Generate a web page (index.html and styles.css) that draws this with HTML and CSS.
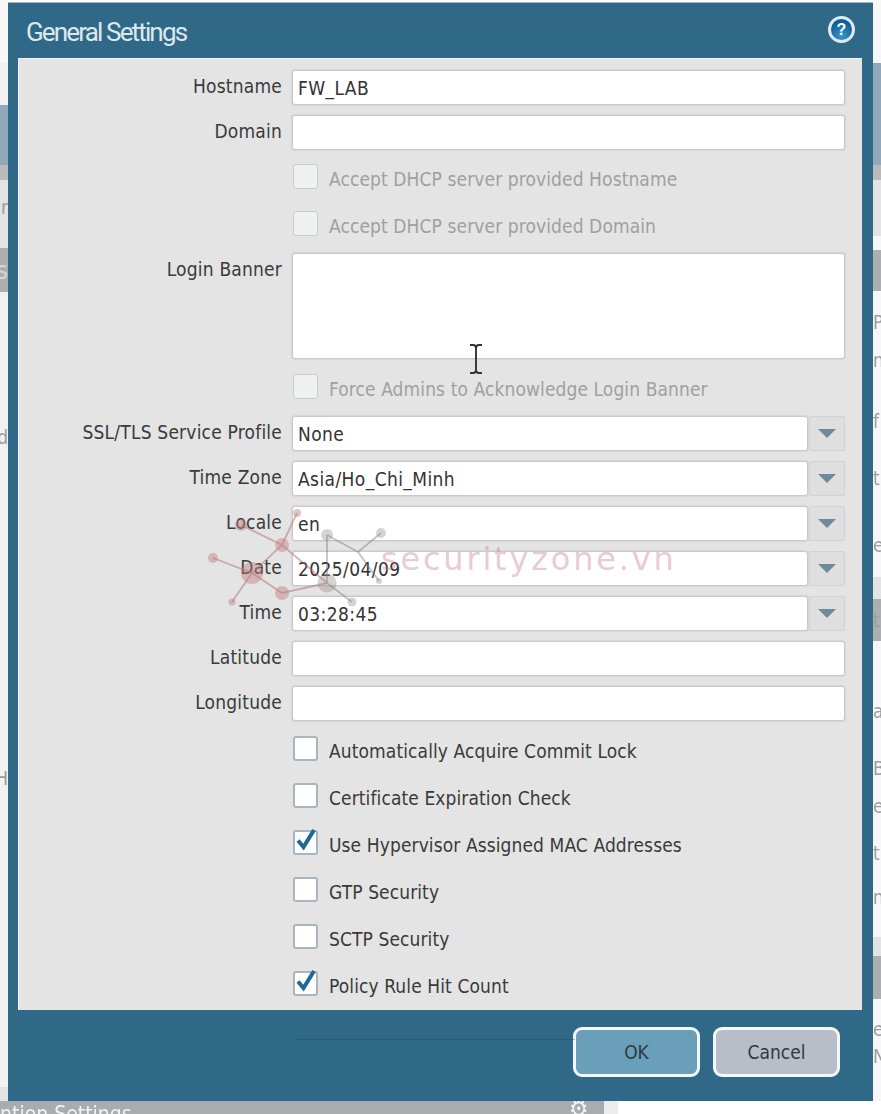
FILE: index.html
```html
<!DOCTYPE html>
<html lang="en">

<head>
    <meta charset="UTF-8">
    <meta name="viewport" content="width=device-width, initial-scale=1.0">
    <title>General Settings</title>
    <link rel="stylesheet" href="styles.css">
</head>

<body>
    <div class="page">
        <div class="top-row">
            <!-- page behind the dialog, only the edges show -->
            <div class="strip">
                <div class="band band-white h63"></div>
                <div class="band band-pale h42"></div>
                <div class="band band-blue h60"></div>
                <div class="band band-grey h15"></div>
                <div class="band band-light h54 letter-left">r</div>
                <div class="band band-light h14"></div>
                <div class="band band-dark h44 letter-left letter-big">s</div>
                <div class="band band-pale h120"></div>
                <div class="band band-pale h50 letter-left">d</div>
                <div class="band band-pale h286"></div>
                <div class="band band-pale h60 letter-left">H</div>
                <div class="band band-pale grow"></div>
                <div class="band band-light h14"></div>
            </div>

            <div class="dialog">
                <div class="dialog-head">
                    <h1 class="dialog-title">General Settings</h1>
                    <div class="help-icon">?</div>
                </div>

                <div class="dialog-body">
                    <div class="row">
                        <label class="row-label">Hostname</label>
                        <div class="text-field">FW_LAB</div>
                    </div>
                    <div class="row">
                        <label class="row-label">Domain</label>
                        <div class="text-field"></div>
                    </div>
                    <div class="check-row gap-14 disabled">
                        <span class="check"></span>
                        <span class="check-label">Accept DHCP server provided Hostname</span>
                    </div>
                    <div class="check-row disabled">
                        <span class="check"></span>
                        <span class="check-label">Accept DHCP server provided Domain</span>
                    </div>
                    <div class="row gap-17">
                        <label class="row-label">Login Banner</label>
                        <div class="text-field text-area"></div>
                    </div>
                    <div class="check-row gap-15 disabled">
                        <span class="check"></span>
                        <span class="check-label">Force Admins to Acknowledge Login Banner</span>
                    </div>
                    <div class="row gap-17">
                        <label class="row-label">SSL/TLS Service Profile</label>
                        <div class="text-field">None</div>
                        <div class="drop-btn"><span class="drop-arrow"></span></div>
                    </div>
                    <div class="row">
                        <label class="row-label">Time Zone</label>
                        <div class="text-field">Asia/Ho_Chi_Minh</div>
                        <div class="drop-btn"><span class="drop-arrow"></span></div>
                    </div>
                    <div class="row">
                        <label class="row-label">Locale</label>
                        <div class="text-field">en</div>
                        <div class="drop-btn"><span class="drop-arrow"></span></div>
                    </div>
                    <div class="row">
                        <label class="row-label">Date</label>
                        <div class="text-field">2025/04/09</div>
                        <div class="drop-btn"><span class="drop-arrow"></span></div>
                    </div>
                    <div class="row">
                        <label class="row-label">Time</label>
                        <div class="text-field">03:28:45</div>
                        <div class="drop-btn"><span class="drop-arrow"></span></div>
                    </div>
                    <div class="row">
                        <label class="row-label">Latitude</label>
                        <div class="text-field"></div>
                    </div>
                    <div class="row">
                        <label class="row-label">Longitude</label>
                        <div class="text-field"></div>
                    </div>
                    <div class="check-row gap-15">
                        <span class="check"></span>
                        <span class="check-label">Automatically Acquire Commit Lock</span>
                    </div>
                    <div class="check-row">
                        <span class="check"></span>
                        <span class="check-label">Certificate Expiration Check</span>
                    </div>
                    <div class="check-row">
                        <span class="check">
                            <svg class="tick" viewBox="0 0 25 25"><path d="M5 13.5 L10.5 20 L21 3" /></svg>
                        </span>
                        <span class="check-label">Use Hypervisor Assigned MAC Addresses</span>
                    </div>
                    <div class="check-row">
                        <span class="check"></span>
                        <span class="check-label">GTP Security</span>
                    </div>
                    <div class="check-row">
                        <span class="check"></span>
                        <span class="check-label">SCTP Security</span>
                    </div>
                    <div class="check-row">
                        <span class="check">
                            <svg class="tick" viewBox="0 0 25 25"><path d="M5 13.5 L10.5 20 L21 3" /></svg>
                        </span>
                        <span class="check-label">Policy Rule Hit Count</span>
                    </div>
                </div>

                <div class="dialog-foot">
                    <button class="btn btn-ok">OK</button>
                    <button class="btn btn-cancel">Cancel</button>
                </div>
            </div>

            <div class="strip">
                <div class="band band-white h63"></div>
                <div class="band band-blue h102"></div>
                <div class="band band-grey h15"></div>
                <div class="band band-light h56"></div>
                <div class="band band-white h14"></div>
                <div class="band band-dark h41"></div>
                <div class="band band-white h15"></div>
                <div class="band band-white h32 letter-right">Pa</div>
                <div class="band band-white h6"></div>
                <div class="band band-white h32 letter-right">n</div>
                <div class="band band-white h29"></div>
                <div class="band band-white h32 letter-right">f</div>
                <div class="band band-white h25"></div>
                <div class="band band-white h32 letter-right">t</div>
                <div class="band band-white h35"></div>
                <div class="band band-white h32 letter-right">e</div>
                <div class="band band-white h16"></div>
                <div class="band band-light h22"></div>
                <div class="band band-dark h42 letter-right">t</div>
                <div class="band band-white h54"></div>
                <div class="band band-white h32 letter-right">a</div>
                <div class="band band-white h25"></div>
                <div class="band band-white h32 letter-right">B</div>
                <div class="band band-white h6"></div>
                <div class="band band-white h32 letter-right">e</div>
                <div class="band band-white h15"></div>
                <div class="band band-white h32 letter-right">t</div>
                <div class="band band-white h12"></div>
                <div class="band band-white h32 letter-right">n</div>
                <div class="band band-white h24"></div>
                <div class="band band-light h19"></div>
                <div class="band band-dark h43"></div>
                <div class="band band-white h14"></div>
                <div class="band band-white h32 letter-right">es</div>
                <div class="band band-white h22 letter-right">N</div>
                <div class="band band-white grow"></div>
            </div>
        </div>

        <div class="bottom-row">
            <div class="bottom-bar">
                <span class="bottom-title">ntion Settings</span>
                <span class="bottom-gear">&#9881;</span>
            </div>
            <div class="bottom-gutter"></div>
        </div>

        <!-- watermark sits on top of the form -->
        <svg class="watermark-net" viewBox="0 0 200 110">
            <g class="net-red">
                <path d="M41 25 L82 45 M97 13 L82 45 L52 73 M13 58 L52 73 L32 102 M52 73 L82 93 L127 83 M82 45 L127 83" />
                <circle cx="41" cy="25" r="6" />
                <circle cx="97" cy="13" r="4" />
                <circle cx="82" cy="45" r="7" />
                <circle cx="13" cy="58" r="5" />
                <circle cx="52" cy="73" r="11" />
                <circle cx="32" cy="102" r="3.5" />
                <circle cx="82" cy="93" r="7" />
            </g>
            <g class="net-grey">
                <path d="M127 35 L127 83 L152 102 M127 35 L158 52 L181 33 M158 52 L179 81" />
                <circle cx="127" cy="35" r="6" />
                <circle cx="181" cy="33" r="5" />
                <circle cx="127" cy="83" r="9.5" />
                <circle cx="152" cy="102" r="4.5" />
                <circle cx="179" cy="81" r="3" />
            </g>
        </svg>
        <div class="watermark-text">securityzone.vn</div>

        <!-- mouse cursor in the banner box -->
        <svg class="text-cursor" viewBox="0 0 14 30">
            <path d="M1 1 H4 Q7 1 7 4 V26 Q7 29 4 29 H1 M13 1 H10 Q7 1 7 4 M7 26 Q7 29 10 29 H13" />
        </svg>

        <div class="stray-line"></div>
    </div>
</body>

</html>
```

FILE: styles.css
```css
:root {
    --frame: #306987;
    --panel: #e4e4e4;
    --text: #3a3a3a;
    --muted: #a0a0a0;
    --field-border: #c9c9c9;
}

* {
    margin: 0;
    padding: 0;
    box-sizing: border-box;
}

body {
    width: 881px;
    height: 1114px;
    overflow: hidden;
    background: #fff;
    font-family: 'DejaVu Sans', 'Liberation Sans', sans-serif;
    font-stretch: condensed;
    font-size: 19px;
    color: var(--text);
}

.page {
    position: relative;
    width: 881px;
    height: 1114px;
    overflow: hidden;
    /* the source is an upscaled capture, everything is soft */
    filter: blur(0.6px);
}

.top-row {
    display: flex;
    height: 1101px;
}

/* backdrop edges */
.strip {
    flex: 0 0 8px;
    display: flex;
    flex-direction: column;
    overflow: hidden;
}

.band {
    flex: none;
    display: flex;
    align-items: center;
    font-size: 19px;
    color: #9c9c9c;
    overflow: hidden;
    white-space: nowrap;
}

.grow { flex: 1; }
.h6 { height: 6px; }
.h14 { height: 14px; }
.h15 { height: 15px; }
.h12 { height: 12px; }
.h16 { height: 16px; }
.h19 { height: 19px; }
.h22 { height: 22px; }
.h24 { height: 24px; }
.h25 { height: 25px; }
.h29 { height: 29px; }
.h32 { height: 32px; }
.h35 { height: 35px; }
.h41 { height: 41px; }
.h42 { height: 42px; }
.h43 { height: 43px; }
.h44 { height: 44px; }
.h50 { height: 50px; }
.h54 { height: 54px; }
.h56 { height: 56px; }
.h60 { height: 60px; }
.h63 { height: 63px; }
.h102 { height: 102px; }
.h120 { height: 120px; }
.h286 { height: 286px; }

.band-white { background: #f7f7f7; }
.band-pale { background: #f0f2f2; }
.band-blue { background: #8fa9ba; }
.band-grey { background: #bababa; }
.band-light { background: #e3e3e3; }
.band-dark { background: #adaeaf; }

.letter-left { justify-content: flex-end; }
.letter-right { justify-content: flex-start; }
.letter-big { font-size: 25px; color: #d8d8d8; }

/* dialog */
.dialog {
    flex: 1;
    margin-top: 2px;
    display: flex;
    flex-direction: column;
    background: var(--frame);
    border-top: 1px solid #9fb6c4;
    padding: 0 11px 0 10px;
}

.dialog-head {
    height: 55px;
    flex: none;
    display: flex;
    align-items: center;
    justify-content: space-between;
    padding-left: 8px;
    padding-right: 7px;
}

.dialog-title {
    font-family: 'Roboto', 'Liberation Sans', sans-serif;
    font-stretch: normal;
    font-size: 26px;
    font-weight: 400;
    letter-spacing: -1.85px;
    color: #dde8ee;
    padding-top: 3px;
}

.help-icon {
    width: 27px;
    height: 27px;
    border: 3px solid #dfeaf0;
    border-radius: 50%;
    background: radial-gradient(circle at 50% 80%, #3a97cc, #0f5f96 70%);
    color: #fff;
    font-family: 'Liberation Sans', sans-serif;
    font-stretch: normal;
    font-size: 16px;
    font-weight: 700;
    line-height: 21px;
    text-align: center;
    margin-bottom: 3px;
}

.dialog-body {
    height: 952px;
    flex: none;
    background: var(--panel);
    border-top: 1px solid #f1f1f1;
    border-left: 1px solid #f1f1f1;
    padding: 11px 17px 0 0;
}

.row {
    display: flex;
    margin-top: 10px;
}

.row:first-child {
    margin-top: 0;
}

.row-label {
    flex: 0 0 263px;
    margin-right: 10px;
    text-align: right;
    line-height: 33px;
    letter-spacing: 0.2px;
}

.text-field {
    flex: 1;
    height: 35px;
    background: #fff;
    border: 1px solid var(--field-border);
    box-shadow: 0 0 1px 1px #d6d6d6;
    border-radius: 3px;
    padding-left: 5px;
    line-height: 35px;
    letter-spacing: 0.4px;
    color: #333;
}

.text-area {
    height: 106px;
}

.drop-btn {
    flex: 0 0 36px;
    height: 35px;
    margin-left: 1px;
    display: flex;
    align-items: center;
    justify-content: center;
    background: #dfdfdf;
    border: 1px solid #d2d2d2;
    border-radius: 2px;
}

.drop-arrow {
    width: 0;
    height: 0;
    border-left: 9px solid transparent;
    border-right: 9px solid transparent;
    border-top: 9px solid #6f8b9b;
}

.check-row {
    display: flex;
    align-items: center;
    height: 25px;
    margin-top: 22px;
    margin-left: 274px;
    gap: 11px;
}

.check-label {
    padding-top: 4px;
    letter-spacing: 0.1px;
}

.gap-14 { margin-top: 14px; }
.gap-15 { margin-top: 15px; }
.gap-17 { margin-top: 17px; }

.check {
    position: relative;
    flex: none;
    width: 25px;
    height: 25px;
    background: #fff;
    border: 2px solid #a9b5bf;
    border-radius: 3px;
}

.tick {
    position: absolute;
    left: -2px;
    top: -5px;
    width: 25px;
    height: 25px;
    fill: none;
    stroke: #1f6a94;
    stroke-width: 4;
}

.disabled {
    color: var(--muted);
}

.disabled .check {
    background: #f0f0f0;
    border: 1px solid #c8cdd1;
}

.dialog-foot {
    flex: 1;
    display: flex;
    justify-content: flex-end;
    gap: 13px;
    padding: 17px 22px 0 0;
}

.btn {
    width: 127px;
    height: 50px;
    border: 3px solid #f4f7f9;
    border-radius: 9px;
    font-family: inherit;
    font-stretch: inherit;
    font-size: 19px;
    color: #2f3a40;
}

.btn-ok {
    background: #6a9fb9;
}

.btn-cancel {
    background: #b9bdc7;
}

/* below the dialog */
.bottom-row {
    display: flex;
    height: 13px;
}

.bottom-bar {
    position: relative;
    width: 604px;
    background: #a9acae;
    overflow: hidden;
}

.bottom-title {
    position: absolute;
    left: 0;
    top: 3px;
    font-size: 21px;
    line-height: 20px;
    color: #f2f2f2;
}

.bottom-gear {
    position: absolute;
    left: 569px;
    top: -3px;
    font-size: 24px;
    line-height: 22px;
    color: #f4f4f4;
}

.bottom-gutter {
    width: 14px;
    background: #ececec;
}

/* overlays */
.watermark-net {
    position: absolute;
    left: 200px;
    top: 500px;
    width: 200px;
    height: 110px;
}

.net-red path,
.net-grey path {
    fill: none;
    stroke-width: 1.8;
}

.net-red path { stroke: rgba(178, 110, 110, 0.5); }
.net-red circle { fill: rgba(190, 125, 125, 0.45); }
.net-grey path { stroke: rgba(120, 120, 120, 0.45); }
.net-grey circle { fill: rgba(150, 140, 140, 0.38); }

.watermark-text {
    position: absolute;
    left: 381px;
    top: 541px;
    font-family: 'DejaVu Sans', 'Liberation Sans', sans-serif;
    font-stretch: normal;
    font-size: 32px;
    line-height: 36px;
    letter-spacing: 2.8px;
    color: rgba(196, 120, 128, 0.4);
    white-space: nowrap;
}

.text-cursor {
    position: absolute;
    left: 469px;
    top: 344px;
    width: 14px;
    height: 30px;
    fill: none;
    stroke: #333;
    stroke-width: 1.9;
}

.stray-line {
    position: absolute;
    left: 295px;
    top: 1039px;
    width: 280px;
    height: 1px;
    background: rgba(35, 65, 85, 0.35);
}
```
